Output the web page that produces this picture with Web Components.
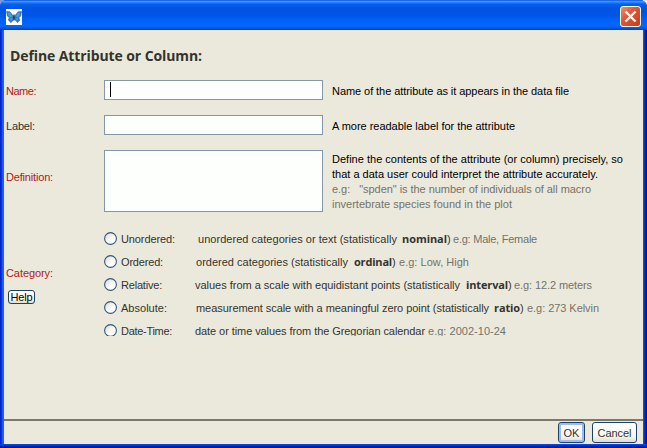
<!DOCTYPE html>
<html lang="en">
<head>
<meta charset="utf-8">
<title>Define Attribute</title>
<style>
html,body{margin:0;height:100%;overflow:hidden;background:linear-gradient(90deg,#7a9be4 50%,#e6e6dc 50%)}
body{font:11px/15px "Liberation Sans",Arial,sans-serif;color:#34342d}
.red{color:#b01818}.black{color:#000}.grey{color:#74736a}
</style>
</head>
<body>
<xp-window>
  <h-title slot="content"><fit-text w="192">Define Attribute or Column:</fit-text></h-title>
  <form-row slot="content" style="--h:20px;--gap:15px">
    <fit-text slot="label" class="red" w="30">Name:</fit-text>
    <text-field caret></text-field>
    <fit-text slot="hint" class="black" w="237">Name of the attribute as it appears in the data file</fit-text>
  </form-row>
  <form-row slot="content" style="--h:20px;--gap:15px">
    <fit-text slot="label" w="29">Label:</fit-text>
    <text-field></text-field>
    <fit-text slot="hint" class="black" w="183">A more readable label for the attribute</fit-text>
  </form-row>
  <form-row slot="content" style="--h:62px;--gap:16px;--ly:-10px;--hy:2px">
    <fit-text slot="label" class="red" w="47">Definition:</fit-text>
    <text-field></text-field>
    <fit-text slot="hint" class="black" w="291">Define the contents of the attribute (or column) precisely, so</fit-text>
    <fit-text slot="hint" class="black" w="266">that a data user could interpret the attribute accurately.</fit-text>
    <fit-text slot="hint" class="grey" w="259">e.g: &nbsp; "spden" is the number of individuals of all macro</fit-text>
    <fit-text slot="hint" class="grey" w="180">invertebrate species found in the plot</fit-text>
  </form-row>
  <category-group slot="content">
    <fit-text slot="label" class="red" w="47">Category:</fit-text>
    <xp-button slot="help" small><fit-text w="22">Help</fit-text></xp-button>
    <radio-row style="--s:78px"><fit-text slot="name" w="54">Unordered:</fit-text>
      <fit-text w="199">unordered categories or text (statistically</fit-text><fit-text w="45" bold gap="5">nominal</fit-text><fit-text w="4">)</fit-text><fit-text class="grey" w="84" gap="2">e.g: Male, Female</fit-text></radio-row>
    <radio-row style="--s:76px"><fit-text slot="name" w="42">Ordered:</fit-text>
      <fit-text w="152">ordered categories (statistically</fit-text><fit-text w="38" bold gap="6">ordinal</fit-text><fit-text w="4">)</fit-text><fit-text class="grey" w="70" gap="3">e.g: Low, High</fit-text></radio-row>
    <radio-row style="--s:75px"><fit-text slot="name" w="41">Relative:</fit-text>
      <fit-text w="265">values from a scale with equidistant points (statistically</fit-text><fit-text w="42" bold gap="6">interval</fit-text><fit-text w="4">)</fit-text><fit-text class="grey" w="78" gap="2">e.g: 12.2 meters</fit-text></radio-row>
    <radio-row style="--s:76px"><fit-text slot="name" w="46">Absolute:</fit-text>
      <fit-text w="293">measurement scale with a meaningful zero point (statistically</fit-text><fit-text w="26" bold gap="5">ratio</fit-text><fit-text w="4">)</fit-text><fit-text class="grey" w="72" gap="3">e.g: 273 Kelvin</fit-text></radio-row>
    <radio-row style="--s:75px"><fit-text slot="name" w="51">Date-Time:</fit-text>
      <fit-text w="230">date or time values from the Gregorian calendar</fit-text><fit-text class="grey" w="78" gap="3">e.g: 2002-10-24</fit-text></radio-row>
  </category-group>
  <xp-button slot="footer" primary style="--w:27px"><fit-text w="16">OK</fit-text></xp-button>
  <xp-button slot="footer" style="--w:45px"><fit-text w="34">Cancel</fit-text></xp-button>
</xp-window>

<script>
function define(name, html, setup) {
  const tpl = document.createElement('template');
  tpl.innerHTML = html;
  customElements.define(name, class extends HTMLElement {
    constructor() {
      super();
      this.attachShadow({ mode: 'open' }).append(tpl.content.cloneNode(true));
    }
    connectedCallback() { if (setup) setup(this); }
  });
}

define('xp-window', `
<style>
:host{display:grid;grid-template-rows:30px 1fr 4px;width:100%;height:100%;box-sizing:border-box;border-radius:7px 7px 0 0;overflow:hidden;
 background:#0831d9}
.bar{display:flex;align-items:center;justify-content:space-between;padding:3px 6px 0;
 background:linear-gradient(#0a50dd 0,#3d95ff 1.5px,#2680fb 2.5px,#0560ee 4px,#0054e3 8px,#0055e5 15px,#0062f8 20px,#0468fd 26px,#0558e6 28px,#003fc8 30px)}
.mid{display:grid;grid-template-columns:4px minmax(0,1fr) 4px;min-height:0}
.l{background:linear-gradient(90deg,#0020c8 0,#0028d0 1px,#0a45ea 2px,#2a6cf0 3px,#1058e8 4px)}
.r{background:linear-gradient(90deg,#2a5fe0 0,#0c38cc 1px,#0020ae 2.5px,#00108c 4px)}
.b{background:linear-gradient(#0c50e0,#0434d4 1.5px,#0018a4 3px,#000f8e)}
.pane{background:#ebe9dc;display:flex;flex-direction:column;min-width:0;min-height:0}
.body{flex:1;min-height:0}
.foot{height:23px;border-top:2px solid #7d786c;display:flex;justify-content:flex-end;align-items:center;gap:7px;padding-right:6px}
svg{display:block}
</style>
<div class="bar">
 <svg width="16" height="16" viewBox="0 0 16 16"><path fill="#fff" d="M0 0h16v16H0z"/>
  <path fill="#2f7cc8" stroke="#3b5f8c" stroke-width=".5" d="M.5 2.3 4 2.8 7.5 7.2 8.5 7.2 12 2.8 15.5 2.3 14.8 7 12.8 8.8 14 11 11.5 13.7 9 11 8.2 9.5 7.4 11 5 13.7 2.2 11 3.3 8.8 1.3 7z"/>
  <path fill="#4f9de4" d="M2 3.6 4 4.1 6.3 7.6 4 8 2.2 6.2zM14 3.6 12 4.1 9.7 7.6 12 8 13.8 6.2zM3.8 9.6 6.3 9 5.2 12z M12.3 9.6 9.8 9l1.1 3z"/>
  <path stroke="#202b3a" stroke-width="1.2" d="M8 5.5v6"/></svg>
 <svg width="21" height="21" viewBox="0 0 21 21"><defs><linearGradient id="g" x1="0" y1="0" x2="1" y2="1"><stop stop-color="#ee9272"/><stop offset=".4" stop-color="#e0583a"/><stop offset="1" stop-color="#c43a12"/></linearGradient></defs>
  <rect x=".5" y=".5" width="20" height="20" rx="2.5" fill="url(#g)" stroke="#fff"/>
  <path d="M5.5 5.5l10 10M15.5 5.5l-10 10" stroke="#fff" stroke-width="2.3"/></svg>
</div>
<div class="mid"><div class="l"></div>
 <div class="pane"><div class="body"><slot name="content"></slot></div><div class="foot"><slot name="footer"></slot></div></div>
<div class="r"></div></div>
<div class="b"></div>`);

define('h-title', `<style>:host{display:block;font:bold 14px/20px "Open Sans","Noto Sans",sans-serif;padding:16px 0 14px 6px}</style><slot></slot>`);

define('form-row', `
<style>
:host{display:grid;grid-template-columns:98px 219px 1fr;column-gap:0;align-items:center;height:var(--h);padding-left:2px;margin-bottom:var(--gap)}
.label{margin-top:calc(3px + var(--ly,0px));white-space:nowrap}
.field{height:var(--h);display:grid}
.hint{padding:var(--hy,3px) 0 0 9px;display:grid;white-space:nowrap}
</style>
<div class="label"><slot name="label"></slot></div><div class="field"><slot></slot></div><div class="hint"><slot name="hint"></slot></div>`);

define('text-field', `
<style>
:host{display:block;box-sizing:border-box;background:#fdfffc;border:1px solid #8496a8}
i{display:none}
:host([caret]) i{display:block;width:1px;height:15px;margin:1px 0 0 5px;background:#000}
</style><i></i>`);

define('category-group', `
<style>
:host{display:grid;grid-template-columns:98px 1fr;padding-left:2px;height:108px;overflow:hidden}
.side{padding-top:38px}
.help{padding:9px 0 0 2px;display:flex}
.list{display:grid;grid-auto-rows:23px;align-content:start}
</style>
<div class="side"><slot name="label"></slot><div class="help"><slot name="help"></slot></div></div>
<div class="list"><slot></slot></div>`);

define('radio-row', `
<style>
:host{display:flex;align-items:center;white-space:nowrap;height:23px}
svg{flex:none;margin:0 4px 2px 0}
.name{width:calc(var(--s) - 1px)}
.name,.desc{display:flex}
</style>
<svg width="13" height="13" viewBox="0 0 13 13"><defs><linearGradient id="r" x1="0" y1="0" x2="1" y2="1"><stop stop-color="#d5d6d0"/><stop offset=".6" stop-color="#fff"/></linearGradient></defs><circle cx="6.5" cy="6.5" r="5.9" fill="url(#r)" stroke="#31567d" stroke-width="1.1"/></svg>
<div class="name"><slot name="name"></slot></div><div class="desc"><slot></slot></div>`);

define('xp-button', `
<style>
:host{display:flex;box-sizing:border-box;width:var(--w);height:21px;border:1px solid #1d4268;border-radius:3px;background:linear-gradient(#fff,#f6f5ef 70%,#dfdcd0);align-items:center;justify-content:center;padding-top:1px}
:host([primary]){box-shadow:inset 0 0 0 2px #9dbcf0}
:host([small]){width:27px;height:14px;color:#000;padding-top:1px}
</style><slot></slot>`);

/* Text run whose letter-spacing is derived from the width given in "w". */
define('fit-text', `<style>
:host{display:block;white-space:nowrap;flex:none}
:host([bold]){font-family:"Open Sans","Noto Sans",sans-serif;font-weight:bold;margin-top:-1px}
span{display:inline-block;vertical-align:top}
</style><span><slot></slot></span>`, el => {
  const w = +el.getAttribute('w');
  el.style.marginLeft = (el.getAttribute('gap') || 0) + 'px';
  const natural = el.shadowRoot.querySelector('span').getBoundingClientRect().width;
  el.style.letterSpacing = ((w - natural) / el.textContent.length) + 'px';
  el.style.width = w + 'px';
});
</script>
</body>
</html>
